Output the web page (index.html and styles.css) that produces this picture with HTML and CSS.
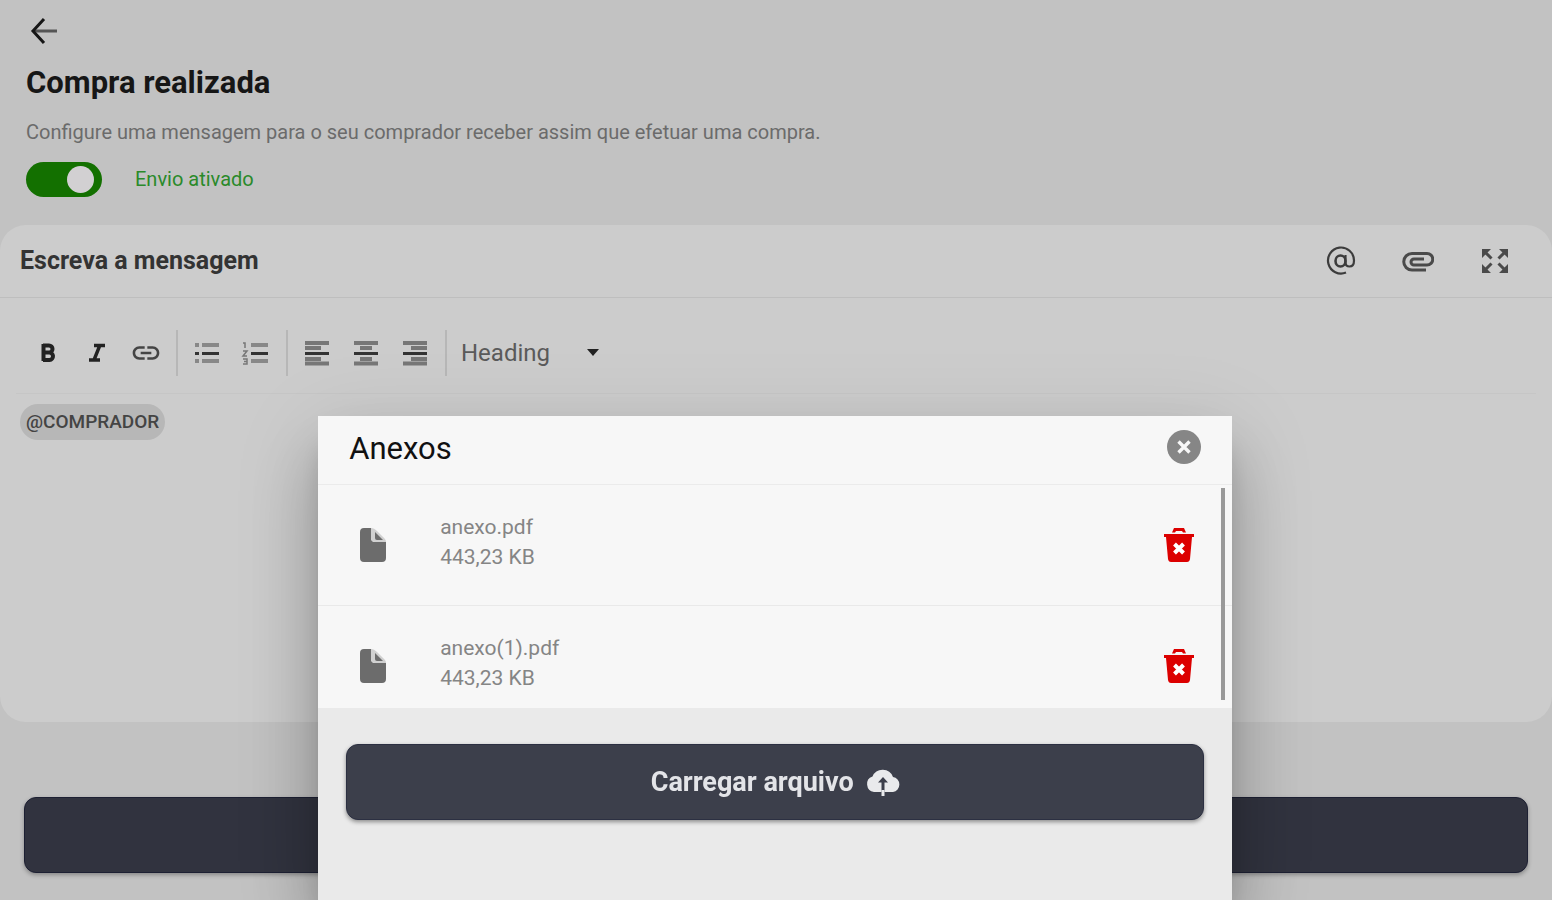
FILE: index.html
```html
<!DOCTYPE html>
<html lang="pt-BR">
  <head>
    <meta charset="UTF-8" />
    <meta name="viewport" content="width=device-width, initial-scale=1.0" />
    <title>Compra realizada</title>
    <link rel="stylesheet" href="styles.css" />
  </head>
  <body>
    <div class="page">
      <header class="page_header">
        <button class="icon_button back" type="button" aria-label="Voltar">
          <svg width="28" height="28" viewBox="0 0 28 28" fill="none" stroke-width="3">
            <path stroke="#555" d="M4 14 H27" />
            <path stroke="#161616" d="M14 2 L3 14 L14 26" />
          </svg>
        </button>
        <h1>Compra realizada</h1>
        <p>Configure uma mensagem para o seu comprador receber assim que efetuar uma compra.</p>
        <div class="switch_row">
          <input class="switch" id="envio" type="checkbox" role="switch" checked />
          <label for="envio">Envio ativado</label>
        </div>
      </header>

      <section class="editor">
        <div class="editor_header">
          <h2>Escreva a mensagem</h2>
          <div class="editor_actions">
            <button class="icon_button" type="button" aria-label="Mencionar">
              <svg width="32" height="32" viewBox="0 0 32 32" fill="none" stroke="#3c3c3c" stroke-width="2.200">
                <path d="M21 27.500 A13 13 0 1 1 29 15.500 C29 19.500 27 21.500 24.500 21.500 C22 21.500 20.500 20 20.500 17.500 V10" />
                <ellipse cx="15.500" cy="16" rx="5" ry="5.500" stroke-width="2.600" />
              </svg>
            </button>
            <button class="icon_button" type="button" aria-label="Anexar">
              <svg width="32" height="32" viewBox="0 0 32 32" fill="none" stroke="#4a4a4a" stroke-width="3">
                <path d="M24 25 H10 A8 8 0 0 1 10 8.500 H25 A5.500 5.500 0 0 1 25 20 H12 A2.800 2.800 0 0 1 12 14 H22" />
              </svg>
            </button>
            <button class="icon_button" type="button" aria-label="Tela cheia">
              <svg width="32" height="32" viewBox="0 0 32 32" fill="#4a4a4a" stroke="#4a4a4a" stroke-width="3">
                <path stroke="none" d="M3 4 H12 L9 7 L6 10 L3 13 Z M29 4 H20 L29 13 Z M3 28 V19 L12 28 Z M29 28 H20 L29 19 Z" />
                <path d="M6 7 L12.500 13.500 M26 7 L19.500 13.500 M6 25 L12.500 18.500 M26 25 L19.500 18.500" />
              </svg>
            </button>
          </div>
        </div>

        <div class="toolbar">
          <div class="tool_group">
            <button class="icon_button" type="button" aria-label="Negrito">
              <svg width="32" height="32" viewBox="0 0 32 32" fill="none" stroke="#222" stroke-width="4">
                <path d="M11 8.500 H17 A3.300 3.300 0 0 1 17 15.500 H11 M17 15.500 A3.700 3.700 0 0 1 17.500 23 H11 M11.500 7 V24" />
              </svg>
            </button>
            <button class="icon_button" type="button" aria-label="Itálico">
              <svg width="32" height="32" viewBox="0 0 32 32" fill="none" stroke="#222" stroke-width="3.400">
                <path d="M13 8.500 H24 M8 23 H19 M19 8 L13 23" />
              </svg>
            </button>
            <button class="icon_button" type="button" aria-label="Link">
              <svg width="32" height="32" viewBox="0 0 24 24" fill="#444">
                <path d="M3.900 12c0-1.710 1.390-3.100 3.100-3.100h4V7H7c-2.760 0-5 2.240-5 5s2.240 5 5 5h4v-1.900H7c-1.710 0-3.100-1.390-3.100-3.100zM8 13h8v-2H8v2zm9-6h-4v1.900h4c1.710 0 3.100 1.390 3.100 3.100s-1.390 3.100-3.100 3.100h-4V17h4c2.760 0 5-2.240 5-5s-2.240-5-5-5z" />
              </svg>
            </button>
          </div>
          <div class="tool_group">
            <button class="icon_button" type="button" aria-label="Lista">
              <svg width="32" height="32" viewBox="0 0 32 32" fill="none" stroke-width="4">
                <path stroke="#888" d="M4 8 H8 M11 8 H28 M4 24 H8 M11 24 H28" />
                <path stroke="#333" stroke-width="3" d="M4 16.500 H8 M11 16.500 H28" />
              </svg>
            </button>
            <button class="icon_button" type="button" aria-label="Lista numerada">
              <svg width="32" height="32" viewBox="0 0 32 32" fill="none" stroke-width="4">
                <path stroke="#888" d="M11 8 H28 M11 24 H28" />
                <path stroke="#333" stroke-width="3" d="M11 16.500 H28" />
                <path stroke="#777" stroke-width="1.500" d="M3 6 H5 V11 M3 14 H7 L3 19 H7 M3 22 H7 V27 H3 M4 24.500 H7" />
              </svg>
            </button>
          </div>
          <div class="tool_group">
            <button class="icon_button" type="button" aria-label="Alinhar à esquerda">
              <svg width="32" height="32" viewBox="0 0 32 32" fill="none" stroke-width="4">
                <path stroke="#777" d="M4 6 H28 M4 11 H20 M4 22 H20 M4 26.500 H28" />
                <path stroke="#333" stroke-width="3" d="M4 16.500 H28" />
              </svg>
            </button>
            <button class="icon_button" type="button" aria-label="Centralizar">
              <svg width="32" height="32" viewBox="0 0 32 32" fill="none" stroke-width="4">
                <path stroke="#777" d="M4 6 H28 M10 11 H22 M10 22 H22 M4 26.500 H28" />
                <path stroke="#333" stroke-width="3" d="M4 16.500 H28" />
              </svg>
            </button>
            <button class="icon_button" type="button" aria-label="Alinhar à direita">
              <svg width="32" height="32" viewBox="0 0 32 32" fill="none" stroke-width="4">
                <path stroke="#777" d="M4 6 H28 M12 11 H28 M12 22 H28 M4 26.500 H28" />
                <path stroke="#333" stroke-width="3" d="M4 16.500 H28" />
              </svg>
            </button>
          </div>
          <div class="heading_select">
            <select aria-label="Estilo do texto">
              <option>Heading</option>
            </select>
            <svg width="12" height="8" viewBox="0 0 12 8" fill="#222">
              <path d="M0 0 H12 L6 7 Z" />
            </svg>
          </div>
        </div>

        <div class="message">
          <span class="chip">@COMPRADOR</span>
        </div>
      </section>

      <footer class="page_footer">
        <button class="primary_button save" type="button" aria-label="Salvar"></button>
      </footer>
    </div>

    <div class="modal" role="dialog" aria-labelledby="modal_title">
      <div class="modal_header">
        <h2 id="modal_title">Anexos</h2>
        <button class="icon_button" type="button" aria-label="Fechar">
          <svg width="34" height="34" viewBox="0 0 34 34">
            <circle cx="17" cy="17" r="17" fill="#868686" />
            <path d="M11.500 11.500 L22.500 22.500 M22.500 11.500 L11.500 22.500" stroke="#f7f7f7" stroke-width="3.400" />
          </svg>
        </button>
      </div>
      <div class="files">
        <ul>
          <li>
            <svg class="file_icon" width="26" height="34" viewBox="0 0 26 34" fill="#6c6c6c">
              <path d="M4 0 H11 V10 A4 4 0 0 0 15 14 H26 V30 A4 4 0 0 1 22 34 H4 A4 4 0 0 1 0 30 V4 A4 4 0 0 1 4 0 Z" />
              <path d="M11 0 C13 0 15 1 17 3 L23 9 C25 11 26 12 26 14 H15 A4 4 0 0 1 11 10 Z" fill="#d0d0d0" />
              <path d="M15 4 L23 12 H17 A2 2 0 0 1 15 10 Z" />
            </svg>
            <div class="file_text">
              <span>anexo.pdf</span>
              <span>443,23 KB</span>
            </div>
            <button class="icon_button" type="button" aria-label="Excluir anexo.pdf">
              <svg width="30" height="34" viewBox="0 0 30 34" fill="#dc0000">
                <path d="M8 4.500 L10 0 H20 L22 4.500 H19 L18 3 H12 L11 4.500 Z" />
                <path d="M0 6 H30 V9 H28 L26 31 Q25.500 34 23 34 H7 Q4.500 34 4 31 L2 9 H0 Z" />
                <path d="M10.500 16 L19.500 25 M19.500 16 L10.500 25" stroke="#fff" stroke-width="4" />
              </svg>
            </button>
          </li>
          <li>
            <svg class="file_icon" width="26" height="34" viewBox="0 0 26 34" fill="#6c6c6c">
              <path d="M4 0 H11 V10 A4 4 0 0 0 15 14 H26 V30 A4 4 0 0 1 22 34 H4 A4 4 0 0 1 0 30 V4 A4 4 0 0 1 4 0 Z" />
              <path d="M11 0 C13 0 15 1 17 3 L23 9 C25 11 26 12 26 14 H15 A4 4 0 0 1 11 10 Z" fill="#d0d0d0" />
              <path d="M15 4 L23 12 H17 A2 2 0 0 1 15 10 Z" />
            </svg>
            <div class="file_text">
              <span>anexo(1).pdf</span>
              <span>443,23 KB</span>
            </div>
            <button class="icon_button" type="button" aria-label="Excluir anexo(1).pdf">
              <svg width="30" height="34" viewBox="0 0 30 34" fill="#dc0000">
                <path d="M8 4.500 L10 0 H20 L22 4.500 H19 L18 3 H12 L11 4.500 Z" />
                <path d="M0 6 H30 V9 H28 L26 31 Q25.500 34 23 34 H7 Q4.500 34 4 31 L2 9 H0 Z" />
                <path d="M10.500 16 L19.500 25 M19.500 16 L10.500 25" stroke="#fff" stroke-width="4" />
              </svg>
            </button>
          </li>
        </ul>
        <div class="scroll_thumb"></div>
      </div>
      <div class="modal_footer">
        <button class="primary_button upload" type="button">
          Carregar arquivo
          <svg width="34" height="28" viewBox="0 0 34 28">
            <path fill="#e9eaec" d="M8 24 A8 8 0 0 1 6.500 8.500 A11 11 0 0 1 27 9 A7.600 7.600 0 0 1 27 24 Z" />
            <path fill="#3c3f4b" d="M17 9 L22 14.500 H18.500 V24 H15.500 V14.500 H12 Z" />
            <path fill="#e9eaec" d="M15.500 22 H18.500 V28 H15.500 Z" />
          </svg>
        </button>
      </div>
    </div>
  </body>
</html>
```
FILE: styles.css
```css
* {
  box-sizing: border-box;
}
body {
  margin: 0;
  background-color: #c2c2c2;
  font-family: Roboto, "Liberation Sans", sans-serif;
  overflow: hidden;
}
h1,
h2,
p,
ul {
  margin: 0;
  padding: 0;
}
button,
select {
  border: none;
  background: none;
  padding: 0;
  font-family: inherit;
}
svg {
  display: block;
  flex-shrink: 0;
}
.page {
  display: flex;
  flex-direction: column;
  min-height: 100vh;
}
.page_header {
  padding: 17px 26px 28px;
}
.back {
  margin-left: 4px;
}
.page_header h1 {
  margin-top: 16px;
  font-size: 31px;
  line-height: 36px;
  font-weight: 700;
  color: #161616;
}
.page_header p {
  margin-top: 19px;
  font-size: 20px;
  line-height: 24px;
  color: #6b6b6b;
}
.switch_row {
  display: flex;
  align-items: center;
  gap: 33px;
  margin-top: 18px;
  font-size: 20px;
  line-height: 24px;
  color: #2a8a2a;
}
.switch_row label {
  padding-bottom: 2px;
}
.switch {
  appearance: none;
  display: flex;
  justify-content: flex-end;
  width: 76px;
  height: 35px;
  margin: 0;
  padding: 4px 8px;
  border-radius: 18px;
  background-color: #137000;
}
.switch::before {
  content: "";
  width: 27px;
  height: 27px;
  border-radius: 50%;
  background-color: #d2d0d2;
}
.editor {
  display: flex;
  flex-direction: column;
  flex: 1;
  border-radius: 26px;
  background-color: #cccccc;
}
.editor_header {
  display: flex;
  align-items: center;
  justify-content: space-between;
  height: 73px;
  padding: 0 41px 0 20px;
  border-bottom: 1px solid #bebebe;
}
.editor_header h2 {
  font-size: 25px;
  line-height: 32px;
  font-weight: 700;
  color: #333;
}
.editor_actions {
  display: flex;
  gap: 45px;
}
.toolbar {
  display: flex;
  align-items: center;
  margin: 0 16px;
  padding: 32px 3px 17px;
  border-bottom: 1px solid #c6c6c6;
}
.tool_group {
  display: flex;
  align-items: center;
  gap: 17px;
  height: 46px;
  padding: 0 14px 0 13px;
  border-right: 2px solid #b7b7b7;
}
.heading_select {
  display: flex;
  align-items: center;
  gap: 36px;
  margin-left: 14px;
}
.heading_select select {
  appearance: none;
  font-size: 24px;
  line-height: 32px;
  color: #5a5a5a;
}
.message {
  flex: 1;
  padding: 10px 20px;
}
.chip {
  display: inline-block;
  padding: 0 6px;
  border-radius: 18px;
  background-color: #b7b7b7;
  font-size: 19px;
  line-height: 36px;
  font-weight: 500;
  color: #444;
}
.page_footer {
  padding: 75px 24px 27px;
}
.primary_button {
  display: flex;
  align-items: center;
  justify-content: center;
  gap: 12px;
  width: 100%;
  height: 76px;
  border-radius: 12px;
}
.save {
  background-color: #31333f;
  border: 1px solid #1d2033;
  box-shadow: 0 2px 4px rgba(0, 0, 0, 0.3);
}
.upload {
  background-color: #3c3f4b;
  border: 1px solid #2c3042;
  box-shadow: 0 2px 4px rgba(0, 0, 0, 0.4);
  font-size: 27px;
  line-height: 32px;
  font-weight: 700;
  color: #e3e4e8;
}
.modal {
  position: fixed;
  top: 416px;
  right: 20.6%;
  bottom: 0;
  left: 20.5%;
  background-color: #eaeaea;
  box-shadow: 0 20px 28px -12px rgba(0, 0, 0, 0.25),
    0 46px 68px 4px rgba(0, 0, 0, 0.2), 0 18px 80px 6px rgba(0, 0, 0, 0.1);
}
.modal_header {
  display: flex;
  align-items: center;
  justify-content: space-between;
  height: 69px;
  padding: 0 31px 6px;
  background-color: #f7f7f7;
  border-bottom: 1px solid #ebebeb;
}
.modal_header h2 {
  padding-top: 4px;
  font-size: 31px;
  line-height: 36px;
  font-weight: 400;
  color: #111;
}
.files {
  position: relative;
  height: 223px;
  overflow: hidden;
  background-color: #f7f7f7;
}
.files ul {
  list-style: none;
}
.files li {
  display: flex;
  align-items: center;
  height: 121px;
  padding: 0 38px 0 42px;
  border-bottom: 1px solid #e9e9e9;
}
.file_text {
  display: flex;
  flex-direction: column;
  flex: 1;
  margin-left: 54px;
  padding-bottom: 6px;
  font-size: 21px;
  line-height: 30px;
  color: #858585;
}
.scroll_thumb {
  position: absolute;
  top: 3px;
  right: 7px;
  width: 4px;
  height: 212px;
  background-color: #999;
}
.modal_footer {
  padding: 36px 28px;
}
```
